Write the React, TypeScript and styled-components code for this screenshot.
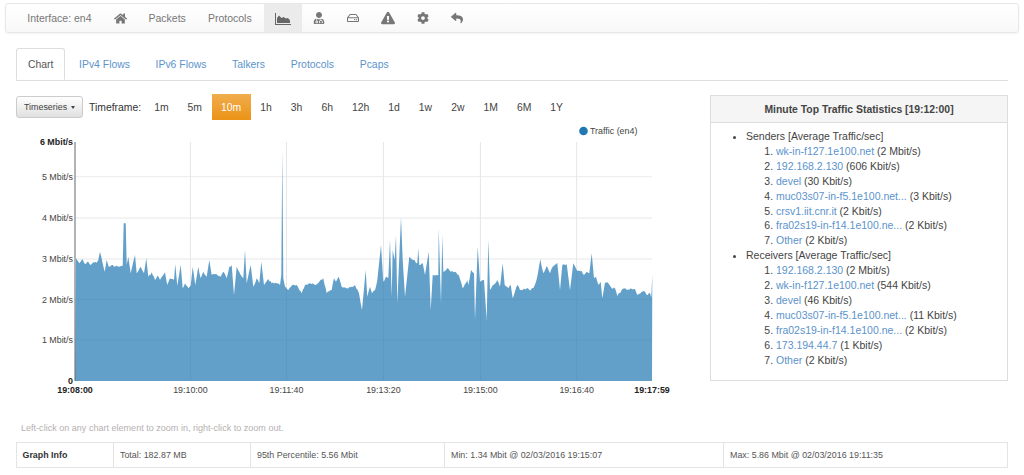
import styled, { createGlobalStyle } from "styled-components";
import { FaCog, FaExclamationTriangle, FaHome, FaRegHdd, FaReply, FaUserMd } from "react-icons/fa";

const GlobalStyle = createGlobalStyle`
  html, body {
    margin: 0;
    background: #fff;
    font-family: "Liberation Sans", Arial, sans-serif;
    font-size: 10.4px;
    line-height: 15px;
    color: #444;
  }
`;

const Page = styled.div`
  width: 1024px;
  height: 475px;
  overflow: hidden;
  padding-top: 3px;
  box-sizing: border-box;
`;

const Navbar = styled.nav`
  margin: 0 5px;
  height: 30px;
  box-sizing: border-box;
  display: flex;
  padding-left: 10.3px;
  font-size: 10.5px;
  background: linear-gradient(to bottom, #fff, #f8f8f8);
  border: 1px solid #e7e7e7;
  border-radius: 3px;
  box-shadow: 0 1px 2px rgba(0, 0, 0, 0.05);
`;

const NavItem = styled.div<{ $active?: boolean }>`
  display: flex;
  align-items: center;
  padding: 0 11px;
  margin-left: ${(p) => (p.$active ? "1.4px" : "0")};
  color: #777;
  background: ${(p) => (p.$active ? "#ebebeb" : "transparent")};
`;

const Main = styled.main`
  padding: 0 16px;
`;

const Tabs = styled.div`
  display: flex;
  margin-top: 15px;
  height: 32px;
  border-bottom: 1px solid #ddd;
`;

const Tab = styled.div<{ $active?: boolean }>`
  height: 32px;
  box-sizing: border-box;
  display: flex;
  align-items: center;
  padding: 0 11px;
  margin-right: 1.7px;
  color: ${(p) => (p.$active ? "#555" : "#5b93cc")};
  background: #fff;
  border: 1px solid ${(p) => (p.$active ? "#ddd" : "transparent")};
  border-bottom-color: ${(p) => (p.$active ? "#fff" : "transparent")};
  border-radius: 3px 3px 0 0;
`;

const Content = styled.div`
  display: flex;
  justify-content: space-between;
  align-items: flex-start;
  margin-top: 13px;
`;

const ChartColumn = styled.div`
  width: 680px;
`;

const Toolbar = styled.div`
  display: flex;
  align-items: center;
  height: 26px;
`;

const Dropdown = styled.div`
  width: 67px;
  height: 22px;
  box-sizing: border-box;
  display: flex;
  align-items: center;
  gap: 4px;
  padding-left: 7px;
  margin-right: 6px;
  font-size: 8.9px;
  color: #444;
  background: linear-gradient(to bottom, #fff, #e0e0e0);
  border: 1px solid #ccc;
  border-radius: 3px;
`;

const Caret = styled.span`
  border-top: 3px solid #444;
  border-left: 2.5px solid transparent;
  border-right: 2.5px solid transparent;
`;

const TimeLabel = styled.span`
  color: #333;
  margin-right: 3.5px;
`;

const RangeButton = styled.div<{ $active?: boolean }>`
  height: 26px;
  box-sizing: border-box;
  display: flex;
  align-items: center;
  padding: 0 9.5px;
  color: ${(p) => (p.$active ? "#fff" : "#444")};
  background: ${(p) => (p.$active ? "linear-gradient(to bottom, #f0ad4e, #eb9316)" : "transparent")};
`;

const ChartSvg = styled.svg`
  display: block;
  width: 680px;
  height: 285px;
  margin-top: 2px;
  font-family: "Liberation Sans", Arial, sans-serif;
  font-size: 8.9px;
`;

const Panel = styled.aside`
  width: 298px;
  height: 286px;
  box-sizing: border-box;
  margin-top: 1px;
  border: 1px solid #ddd;
`;

const PanelHeading = styled.div`
  height: 26px;
  display: flex;
  align-items: center;
  justify-content: center;
  font-size: 10.4px;
  font-weight: 700;
  color: #444;
  background: #f5f5f5;
  border-bottom: 1px solid #ddd;
`;

const PanelBody = styled.div`
  padding: 6px 11px;
`;

const StatsList = styled.ul`
  margin: 0;
  padding-left: 24px;
  font-size: 10.5px;
  line-height: 14.9px;
`;

const HostList = styled.ol`
  margin: 0;
  padding-left: 30px;
`;

const HostLink = styled.a`
  color: #5b93cc;
`;

const Hint = styled.div`
  margin: 0 0 0 5px;
  font-size: 9.05px;
  color: #b5b0b0;
`;

const HintRow = styled.div`
  margin-top: 14px;
  height: 15px;
`;

const InfoTable = styled.table`
  width: 992px;
  margin-top: 6px;
  table-layout: fixed;
  border-collapse: collapse;
  font-size: 8.9px;
  color: #555;
`;

const InfoCell = styled.td<{ $width: number; $head?: boolean }>`
  width: ${(p) => p.$width}px;
  height: 25px;
  box-sizing: border-box;
  padding: 0 ${(p) => (p.$head ? 5.5 : 6)}px;
  border: 1px solid #e4e4e4;
  font-weight: ${(p) => (p.$head ? 700 : 400)};
  color: ${(p) => (p.$head ? "#333" : "#555")};
`;

// small area chart glyph of the toolbar, the icon set has no close match
const AreaIcon = () => (
  <svg width="16" height="13" viewBox="0 0 16 13" fill="#666">
    <path d="M0 1h1v11h15v1H0z" />
    <path d="M2 11V6l2-2.5 2.5 2.5 2-1 2.5 1.5 2-.5 2 2.5V11z" />
  </svg>
);

const RANGES = ["1m", "5m", "10m", "1h", "3h", "6h", "12h", "1d", "1w", "2w", "1M", "6M", "1Y"];

const SENDERS: [string, string][] = [
  ["wk-in-f127.1e100.net", "2 Mbit/s"],
  ["192.168.2.130", "606 Kbit/s"],
  ["devel", "30 Kbit/s"],
  ["muc03s07-in-f5.1e100.net...", "3 Kbit/s"],
  ["crsv1.iit.cnr.it", "2 Kbit/s"],
  ["fra02s19-in-f14.1e100.ne...", "2 Kbit/s"],
  ["Other", "2 Kbit/s"],
];

const RECEIVERS: [string, string][] = [
  ["192.168.2.130", "2 Mbit/s"],
  ["wk-in-f127.1e100.net", "544 Kbit/s"],
  ["devel", "46 Kbit/s"],
  ["muc03s07-in-f5.1e100.net...", "11 Kbit/s"],
  ["fra02s19-in-f14.1e100.ne...", "2 Kbit/s"],
  ["173.194.44.7", "1 Kbit/s"],
  ["Other", "2 Kbit/s"],
];

// chart is drawn in page coordinates, see the viewBox below
const LEFT = 75;
const RIGHT = 652;
const TOP = 142;
const BOTTOM = 381;

// traffic outline, traced from 3x crops: [x, y] relative to the crop origin
const PART_A = [
  [18,130],[28,145],[38,133],[45,147],[55,140],[62,150],[70,142],[80,143],[85,135],[90,110],[97,140],[104,170],[110,135],[116,155],[125,150],[135,155],[145,155],[158,152],[161,25],[167,25],[170,150],[175,125],[182,175],[195,120],[200,175],[212,155],[222,175],[229,130],[235,185],[245,172],[255,195],[262,182],[270,195],[285,172],[292,210],[300,190],[312,195],[316,148],[322,212],[332,150],[338,220],[345,205],[355,220],[362,212],[368,155],[376,210],[385,155],[392,190],[400,170],[410,185],[418,135],[425,180],[440,178],[452,185],[460,170],[470,190],[478,155],[485,150],[492,240],[500,155],[512,180],[520,190],[525,105],[530,205],[542,150],[550,215],[560,190],[568,205],[574,140],[582,210],[595,192],[605,205],[620,205],[630,210],[634,180],[637,-195],[640,190],[645,215],[655,225],[665,212],[680,210],[695,235],[705,210],[720,205],[735,210],[760,190],[770,235],[785,225],[792,190],[798,200],[806,185],[815,215],[835,220],[845,215],[855,210],[867,235],
];

const PART_B = [
  [6,300],[17,180],[22,260],[30,230],[36,250],[45,240],[52,210],[63,105],[70,215],[80,200],[85,205],[90,90],[95,260],[98,120],[104,150],[108,75],[112,280],[123,22],[128,150],[135,260],[148,140],[160,150],[172,160],[175,115],[178,165],[188,160],[195,195],[206,125],[212,300],[218,195],[235,195],[236,55],[243,280],[247,75],[250,185],[262,175],[272,185],[285,185],[296,195],[308,235],[322,210],[325,225],[333,180],[342,190],[345,330],[353,110],[360,215],[372,210],[380,330],[385,90],[390,240],[400,225],[412,210],[420,230],[428,160],[434,225],[445,235],[452,225],[458,265],[472,225],[480,240],[500,235],[508,240],[520,235],[530,208],[541,148],[550,190],[560,168],[570,190],[578,170],[592,158],[600,240],[607,165],[620,163],[630,240],[640,160],[652,183],[665,183],[672,195],[680,185],[688,190],[695,130],[702,205],[708,200],[716,225],[722,215],[727,265],[735,218],[745,220],[755,235],[765,235],[772,258],[785,240],[795,235],[802,240],[812,235],[825,237],[832,255],[845,245],[855,245],[860,255],[870,250],[874,262],[877,195],
];

const toPage = (pts: number[][], ox: number, oy: number) =>
  pts.map(([x, y]) => [ox + x / 3, oy + y / 3]);

// fixed pseudo random value in -1..1, so the picture is the same on every load
const noise = (x: number) => {
  const v = Math.sin(x * 12.9898) * 43758.5453;
  return (v - Math.floor(v)) * 2 - 1;
};

// fill long flat stretches with the small teeth a 1s sampled series has
const roughen = (pts: number[][]) => {
  const out: number[][] = [];
  pts.forEach(([x, y], i) => {
    out.push([x, y]);
    const next = pts[i + 1];
    if (!next) return;
    const steps = Math.floor((next[0] - x) / 1.1);
    if (Math.abs(next[1] - y) / (next[0] - x) > 6) return;
    for (let s = 1; s < steps; s++) {
      const t = s / steps;
      const px = x + (next[0] - x) * t;
      out.push([px, y + (next[1] - y) * t + noise(px) * 0.9]);
    }
  });
  return out;
};

const AREA = [
  [LEFT, BOTTOM],
  ...roughen([...toPage(PART_A, 70, 215), ...toPage(PART_B, 360, 210)]),
  [RIGHT, BOTTOM],
]
  .map(([x, y]) => `${x.toFixed(1)},${y.toFixed(1)}`)
  .join(" ");

const Y_TICKS = [
  { label: "5 Mbit/s", y: 176.7 },
  { label: "4 Mbit/s", y: 218 },
  { label: "3 Mbit/s", y: 259 },
  { label: "2 Mbit/s", y: 299.5 },
  { label: "1 Mbit/s", y: 340 },
];

const X_TICKS = [
  { label: "19:10:00", x: 190.4 },
  { label: "19:11:40", x: 286.5 },
  { label: "19:13:20", x: 383.4 },
  { label: "19:15:00", x: 480.4 },
  { label: "19:16:40", x: 576.7 },
];

const TrafficChart = () => (
  <ChartSvg viewBox="16 122 680 285">
    <circle cx="583.5" cy="131" r="4.3" fill="#1f77b4" />
    <text x="590" y="134" fill="#444">Traffic (en4)</text>

    {Y_TICKS.map((t) => (
      <line key={t.label} x1={LEFT} x2={RIGHT} y1={t.y} y2={t.y} stroke="#efefef" strokeWidth="1.3" />
    ))}
    {X_TICKS.map((t) => (
      <line key={t.label} x1={t.x} x2={t.x} y1={TOP} y2={BOTTOM} stroke="#e6e6e6" />
    ))}

    <polygon points={AREA} fill="#1f77b4" fillOpacity="0.7" />
    <line x1={LEFT} x2={LEFT} y1={TOP} y2={BOTTOM} stroke="#666" />

    <text x="73" y="145" textAnchor="end" fontWeight="700" fill="#222">6 Mbit/s</text>
    {Y_TICKS.map((t) => (
      <text key={t.label} x="73" y={t.y + 3} textAnchor="end" fill="#444">{t.label}</text>
    ))}
    <text x="73" y="384" textAnchor="end" fontWeight="700" fill="#222">0</text>

    <text x={LEFT} y="393" textAnchor="middle" fontWeight="700" fill="#222">19:08:00</text>
    {X_TICKS.map((t) => (
      <text key={t.label} x={t.x} y="393" textAnchor="middle" fill="#444">{t.label}</text>
    ))}
    <text x={RIGHT} y="393" textAnchor="middle" fontWeight="700" fill="#222">19:17:59</text>
  </ChartSvg>
);

const Hosts = ({ rows }: { rows: [string, string][] }) => (
  <HostList>
    {rows.map(([host, rate]) => (
      <li key={host}>
        <HostLink>{host}</HostLink> ({rate})
      </li>
    ))}
  </HostList>
);

const App = () => {
  return (
    <Page>
      <GlobalStyle />
      <Navbar>
        <NavItem>Interface: en4</NavItem>
        <NavItem><FaHome size={13} /></NavItem>
        <NavItem>Packets</NavItem>
        <NavItem>Protocols</NavItem>
        <NavItem $active><AreaIcon /></NavItem>
        <NavItem><FaUserMd size={12} /></NavItem>
        <NavItem><FaRegHdd size={12} /></NavItem>
        <NavItem><FaExclamationTriangle size={14} /></NavItem>
        <NavItem><FaCog size={12} /></NavItem>
        <NavItem><FaReply size={12} /></NavItem>
      </Navbar>
      <Main>
        <Tabs>
          <Tab $active>Chart</Tab>
          <Tab>IPv4 Flows</Tab>
          <Tab>IPv6 Flows</Tab>
          <Tab>Talkers</Tab>
          <Tab>Protocols</Tab>
          <Tab>Pcaps</Tab>
        </Tabs>
        <Content>
          <ChartColumn>
            <Toolbar>
              <Dropdown>Timeseries <Caret /></Dropdown>
              <TimeLabel>Timeframe:</TimeLabel>
              {RANGES.map((r) => (
                <RangeButton key={r} $active={r === "10m"}>{r}</RangeButton>
              ))}
            </Toolbar>
            <TrafficChart />
          </ChartColumn>
          <Panel>
            <PanelHeading>Minute Top Traffic Statistics [19:12:00]</PanelHeading>
            <PanelBody>
              <StatsList>
                <li>Senders [Average Traffic/sec]<Hosts rows={SENDERS} /></li>
                <li>Receivers [Average Traffic/sec]<Hosts rows={RECEIVERS} /></li>
              </StatsList>
            </PanelBody>
          </Panel>
        </Content>
        <HintRow><Hint>Left-click on any chart element to zoom in, right-click to zoom out.</Hint></HintRow>
        <InfoTable>
          <tbody>
            <tr>
              <InfoCell $width={97} $head>Graph Info</InfoCell>
              <InfoCell $width={137}>Total: 182.87 MB</InfoCell>
              <InfoCell $width={194}>95th Percentile: 5.56 Mbit</InfoCell>
              <InfoCell $width={279}>Min: 1.34 Mbit @ 02/03/2016 19:15:07</InfoCell>
              <InfoCell $width={284}>Max: 5.86 Mbit @ 02/03/2016 19:11:35</InfoCell>
            </tr>
          </tbody>
        </InfoTable>
      </Main>
    </Page>
  );
};

export default App;
